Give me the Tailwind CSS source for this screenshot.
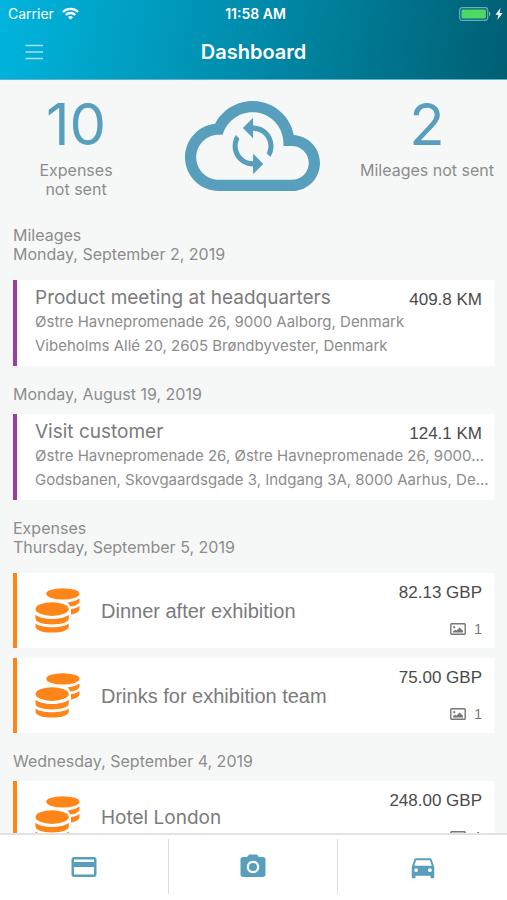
<!DOCTYPE html>
<html lang="en">
<head>
<meta charset="utf-8">
<meta name="viewport" content="width=device-width, initial-scale=1">
<title>Dashboard</title>
<script src="https://cdn.jsdelivr.net/npm/@tailwindcss/browser@4"></script>
</head>
<body class="flex h-screen flex-col overflow-hidden bg-[#f6f8f8] font-['Inter',sans-serif] text-[#8c8c8c]">

<svg class="hidden" aria-hidden="true">
  <symbol id="coins" viewBox="0 0 46 46">
    <ellipse cx="28.500" cy="6" rx="17" ry="5.800"/>
    <path d="M33 14.800C38.500 14.300 43 12.800 45.500 10.600V13.500C45.500 16.500 41 18.300 36.200 19C35.500 17.200 34.500 15.900 33 14.800Z"/>
    <path d="M36.800 21.500C40.500 21 43.500 19.900 45.500 18.300V21.500C45.500 24.500 41 26.600 36.800 27.200Z"/>
    <ellipse cx="17.500" cy="21.500" rx="17" ry="7"/>
    <path d="M.5 27.300C4 30.200 10 31.600 17.500 31.600S31 30.200 34.500 27.300V31.500C34.500 34.700 27.500 37.200 17.500 37.200S.5 34.700 .5 31.500Z"/>
    <path d="M.5 36.300C4 38.900 10 40.100 17.500 40.100S31 38.900 34.500 36.300V39.500C34.500 43 27.500 45.500 17.500 45.500S.5 43 .5 39.500Z"/>
  </symbol>
  <symbol id="photo" viewBox="0 0 16 12">
    <rect x=".8" y=".8" width="14.400" height="10.400" rx=".8" fill="none" stroke="currentColor" stroke-width="1.400"/>
    <circle cx="4.200" cy="4.200" r="1.100"/>
    <path d="M3 9.500V8.200L5.200 6.800L6.600 7.600L9.600 4.400L13 7.800V9.500Z"/>
  </symbol>
</svg>

<header class="shrink-0 border-b border-[#5db4c8] bg-linear-[100deg,#00b5de,#0089a8_52%,#005f73] text-white">
  <div class="grid h-[27px] grid-cols-3 items-center px-1 text-[14px]">
    <div class="flex items-center gap-2 pl-1">
      <span>Carrier</span>
      <svg class="h-[13px] w-[17px]" viewBox="0 0 17 13" fill="none" stroke="currentColor" stroke-width="2.300" aria-label="Wi-Fi">
        <path d="M.9 5A10.800 10.800 0 0 1 16.100 5"/>
        <path d="M3.700 8A6.800 6.800 0 0 1 13.300 8"/>
        <path d="M8.500 12.600L6 10.200A3.500 3.500 0 0 1 11 10.200Z" fill="currentColor" stroke="none"/>
      </svg>
    </div>
    <span class="pl-1 text-center font-semibold">11:58 AM</span>
    <div class="flex items-center justify-end gap-1">
      <svg class="h-[14px] w-8" viewBox="0 0 32 14" aria-label="Battery">
        <rect x=".7" y=".7" width="28" height="12.600" rx="2.500" fill="none" stroke="#fff" stroke-opacity=".45" stroke-width="1.200"/>
        <rect x="2.500" y="2.500" width="24.400" height="9" rx="1" fill="#4cd964"/>
        <path d="M30 4.800C31.800 5.200 31.800 8.800 30 9.200Z" fill="#fff" fill-opacity=".5"/>
      </svg>
      <svg class="h-3 w-2" viewBox="0 0 8 12" fill="currentColor" aria-label="Charging"><path d="M5.500 0L.5 6.800H3.400L2.300 12L7.600 5H4.600Z"/></svg>
    </div>
  </div>
  <div class="grid h-[52px] grid-cols-[1fr_auto_1fr] items-center px-6 pb-0.5">
    <button class="flex size-5 items-center text-[#a5e2f1]" aria-label="Menu">
      <svg class="h-4 w-5" viewBox="0 0 20 16" fill="none" stroke="currentColor" stroke-width="1.700"><path d="M1.500 1.500H19M1.500 8H19M1.500 14.500H19"/></svg>
    </button>
    <h1 class="text-[20px] font-semibold">Dashboard</h1>
  </div>
</header>

<main class="min-h-0 flex-1 overflow-hidden px-[13px]">
  <section class="grid h-[146px] grid-cols-[126px_1fr_134px] pt-[15px] text-center text-[16px] leading-[19px]">
    <div>
      <div class="text-[58px] leading-[58px] text-[#589fbe]">10</div>
      <p class="mt-2">Expenses<br>not sent</p>
    </div>
    <button class="self-start justify-self-center pt-1.5 pl-1.5" aria-label="Sync">
      <svg class="h-[90px] w-[135px] fill-[#589fbe]" viewBox="0 4 24 16">
        <path d="M19.350 10.040C18.670 6.590 15.640 4 12 4 9.110 4 6.600 5.640 5.350 8.040 2.340 8.360 0 10.910 0 14c0 3.310 2.690 6 6 6h13c2.760 0 5-2.240 5-5 0-2.640-2.050-4.780-4.650-4.960zM19 18H6c-2.210 0-4-1.790-4-4s1.790-4 4-4h.71C7.370 7.690 9.480 6 12 6c3.040 0 5.500 2.460 5.500 5.500v.5H19c1.660 0 3 1.340 3 3s-1.340 3-3 3z"/>
        <path transform="translate(12.100 12) scale(.455) translate(-12 -12)" d="M12 4V1L8 5l4 4V6c3.310 0 6 2.690 6 6 0 1.010-.25 1.970-.7 2.800l1.460 1.460C19.540 15.030 20 13.570 20 12c0-4.420-3.580-8-8-8zm0 14c-3.310 0-6-2.690-6-6 0-1.010.25-1.970.7-2.800L5.240 7.740C4.460 8.970 4 10.430 4 12c0 4.420 3.580 8 8 8v3l4-4-4-4v3z"/>
      </svg>
    </button>
    <div>
      <div class="text-[58px] leading-[58px] text-[#589fbe]">2</div>
      <p class="mt-2 whitespace-nowrap">Mileages not sent</p>
    </div>
  </section>

  <section>
    <h2 class="text-[16px] leading-[19px]">Mileages</h2>
    <h3 class="text-[16px] leading-[19px]">Monday, September 2, 2019</h3>
    <article class="mt-4 h-[86px] border-l-4 border-[#9b3f9f] bg-white pt-1.5 pr-3 pl-[18px]">
      <div class="flex h-6 items-center justify-between">
        <h4 class="text-[19px] text-[#7b7b7b]">Product meeting at headquarters</h4>
        <span class="pt-1 font-['Liberation_Sans',sans-serif] text-[17px] text-[#4a4a4a]">409.8 KM</span>
      </div>
      <p class="-mr-2 truncate text-[15px] leading-6">Østre Havnepromenade 26, 9000 Aalborg, Denmark</p>
      <p class="-mr-2 truncate text-[15px] leading-6">Vibeholms Allé 20, 2605 Brøndbyvester, Denmark</p>
    </article>
    <h3 class="mt-[19px] text-[16px] leading-[19px]">Monday, August 19, 2019</h3>
    <article class="mt-2.5 h-[86px] border-l-4 border-[#9b3f9f] bg-white pt-1.5 pr-3 pl-[18px]">
      <div class="flex h-6 items-center justify-between">
        <h4 class="text-[19px] text-[#7b7b7b]">Visit customer</h4>
        <span class="pt-1 font-['Liberation_Sans',sans-serif] text-[17px] text-[#4a4a4a]">124.1 KM</span>
      </div>
      <p class="-mr-2 truncate text-[15px] leading-6">Østre Havnepromenade 26, Østre Havnepromenade 26, 9000...</p>
      <p class="-mr-2 truncate text-[15px] leading-6">Godsbanen, Skovgaardsgade 3, Indgang 3A, 8000 Aarhus, De...</p>
    </article>
  </section>

  <section class="mt-[19px]">
    <h2 class="text-[16px] leading-[19px]">Expenses</h2>
    <h3 class="text-[16px] leading-[19px]">Thursday, September 5, 2019</h3>
    <article class="mt-4 flex h-[75px] items-center border-l-4 border-[#ff8519] bg-white pr-3 pl-[18px]">
      <svg class="size-[45px] fill-[#ff8519]"><use href="#coins"/></svg>
      <h4 class="ml-[21px] flex-1 font-['Liberation_Sans',sans-serif] text-[20px] text-[#7b7b7b]">Dinner after exhibition</h4>
      <div class="flex h-full flex-col items-end justify-between py-2">
        <span class="font-['Liberation_Sans',sans-serif] text-[17px] leading-6 text-[#4a4a4a]">82.13 GBP</span>
        <span class="flex items-center gap-2 font-['Liberation_Sans',sans-serif] text-[14px] leading-[22px] text-[#777]"><svg class="h-3 w-4 fill-current"><use href="#photo"/></svg>1</span>
      </div>
    </article>
    <article class="mt-2.5 flex h-[75px] items-center border-l-4 border-[#ff8519] bg-white pr-3 pl-[18px]">
      <svg class="size-[45px] fill-[#ff8519]"><use href="#coins"/></svg>
      <h4 class="ml-[21px] flex-1 font-['Liberation_Sans',sans-serif] text-[20px] text-[#7b7b7b]">Drinks for exhibition team</h4>
      <div class="flex h-full flex-col items-end justify-between py-2">
        <span class="font-['Liberation_Sans',sans-serif] text-[17px] leading-6 text-[#4a4a4a]">75.00 GBP</span>
        <span class="flex items-center gap-2 font-['Liberation_Sans',sans-serif] text-[14px] leading-[22px] text-[#777]"><svg class="h-3 w-4 fill-current"><use href="#photo"/></svg>1</span>
      </div>
    </article>
    <h3 class="mt-[19px] text-[16px] leading-[19px]">Wednesday, September 4, 2019</h3>
    <article class="mt-2.5 flex h-[75px] items-center border-l-4 border-[#ff8519] bg-white pr-3 pl-[18px]">
      <svg class="size-[45px] fill-[#ff8519]"><use href="#coins"/></svg>
      <h4 class="ml-[21px] flex-1 text-[19px] text-[#7b7b7b]">Hotel London</h4>
      <div class="flex h-full flex-col items-end justify-between py-2">
        <span class="font-['Liberation_Sans',sans-serif] text-[17px] leading-6 text-[#4a4a4a]">248.00 GBP</span>
        <span class="flex items-center gap-2 font-['Liberation_Sans',sans-serif] text-[14px] leading-[22px] text-[#777]"><svg class="h-3 w-4 fill-current"><use href="#photo"/></svg>1</span>
      </div>
    </article>
  </section>
</main>

<nav class="grid h-[67px] shrink-0 grid-cols-3 divide-x divide-[#dcdcdc] border-t-2 border-[#e2e2e2] bg-white pt-1 pb-1.5">
  <button class="flex items-center justify-center" aria-label="New expense">
    <svg class="size-[30px] fill-[#589fbe]" viewBox="0 0 24 24"><path d="M20 4H4c-1.110 0-1.990.89-1.990 2L2 18c0 1.110.89 2 2 2h16c1.110 0 2-.89 2-2V6c0-1.110-.89-2-2-2zm0 14H4v-6h16v6zm0-10H4V6h16v2z"/></svg>
  </button>
  <button class="flex items-center justify-center" aria-label="Take photo">
    <svg class="size-[30px] fill-[#589fbe]" viewBox="0 0 24 24"><path d="M9 2L7.170 4H4c-1.100 0-2 .9-2 2v12c0 1.100.9 2 2 2h16c1.100 0 2-.9 2-2V6c0-1.100-.9-2-2-2h-3.170L15 2H9zm3 15c-2.760 0-5-2.240-5-5s2.240-5 5-5 5 2.240 5 5-2.240 5-5 5z"/><circle cx="12" cy="12" r="3.200"/></svg>
  </button>
  <button class="flex items-center justify-center" aria-label="New mileage">
    <svg class="size-[30px] fill-[#589fbe]" viewBox="0 0 24 24"><path d="M18.920 6.010C18.720 5.420 18.160 5 17.500 5h-11c-.66 0-1.210.42-1.420 1.010L3 12v8c0 .55.45 1 1 1h1c.55 0 1-.45 1-1v-1h12v1c0 .55.45 1 1 1h1c.55 0 1-.45 1-1v-8l-2.080-5.990zM6.500 16c-.83 0-1.500-.67-1.500-1.500S5.670 13 6.500 13s1.500.67 1.500 1.500S7.330 16 6.500 16zm11 0c-.83 0-1.500-.67-1.500-1.500s.67-1.500 1.500-1.500 1.500.67 1.500 1.500-.67 1.500-1.500 1.500zM5 11l1.500-4.500h11L19 11H5z"/></svg>
  </button>
</nav>
</body>
</html>
